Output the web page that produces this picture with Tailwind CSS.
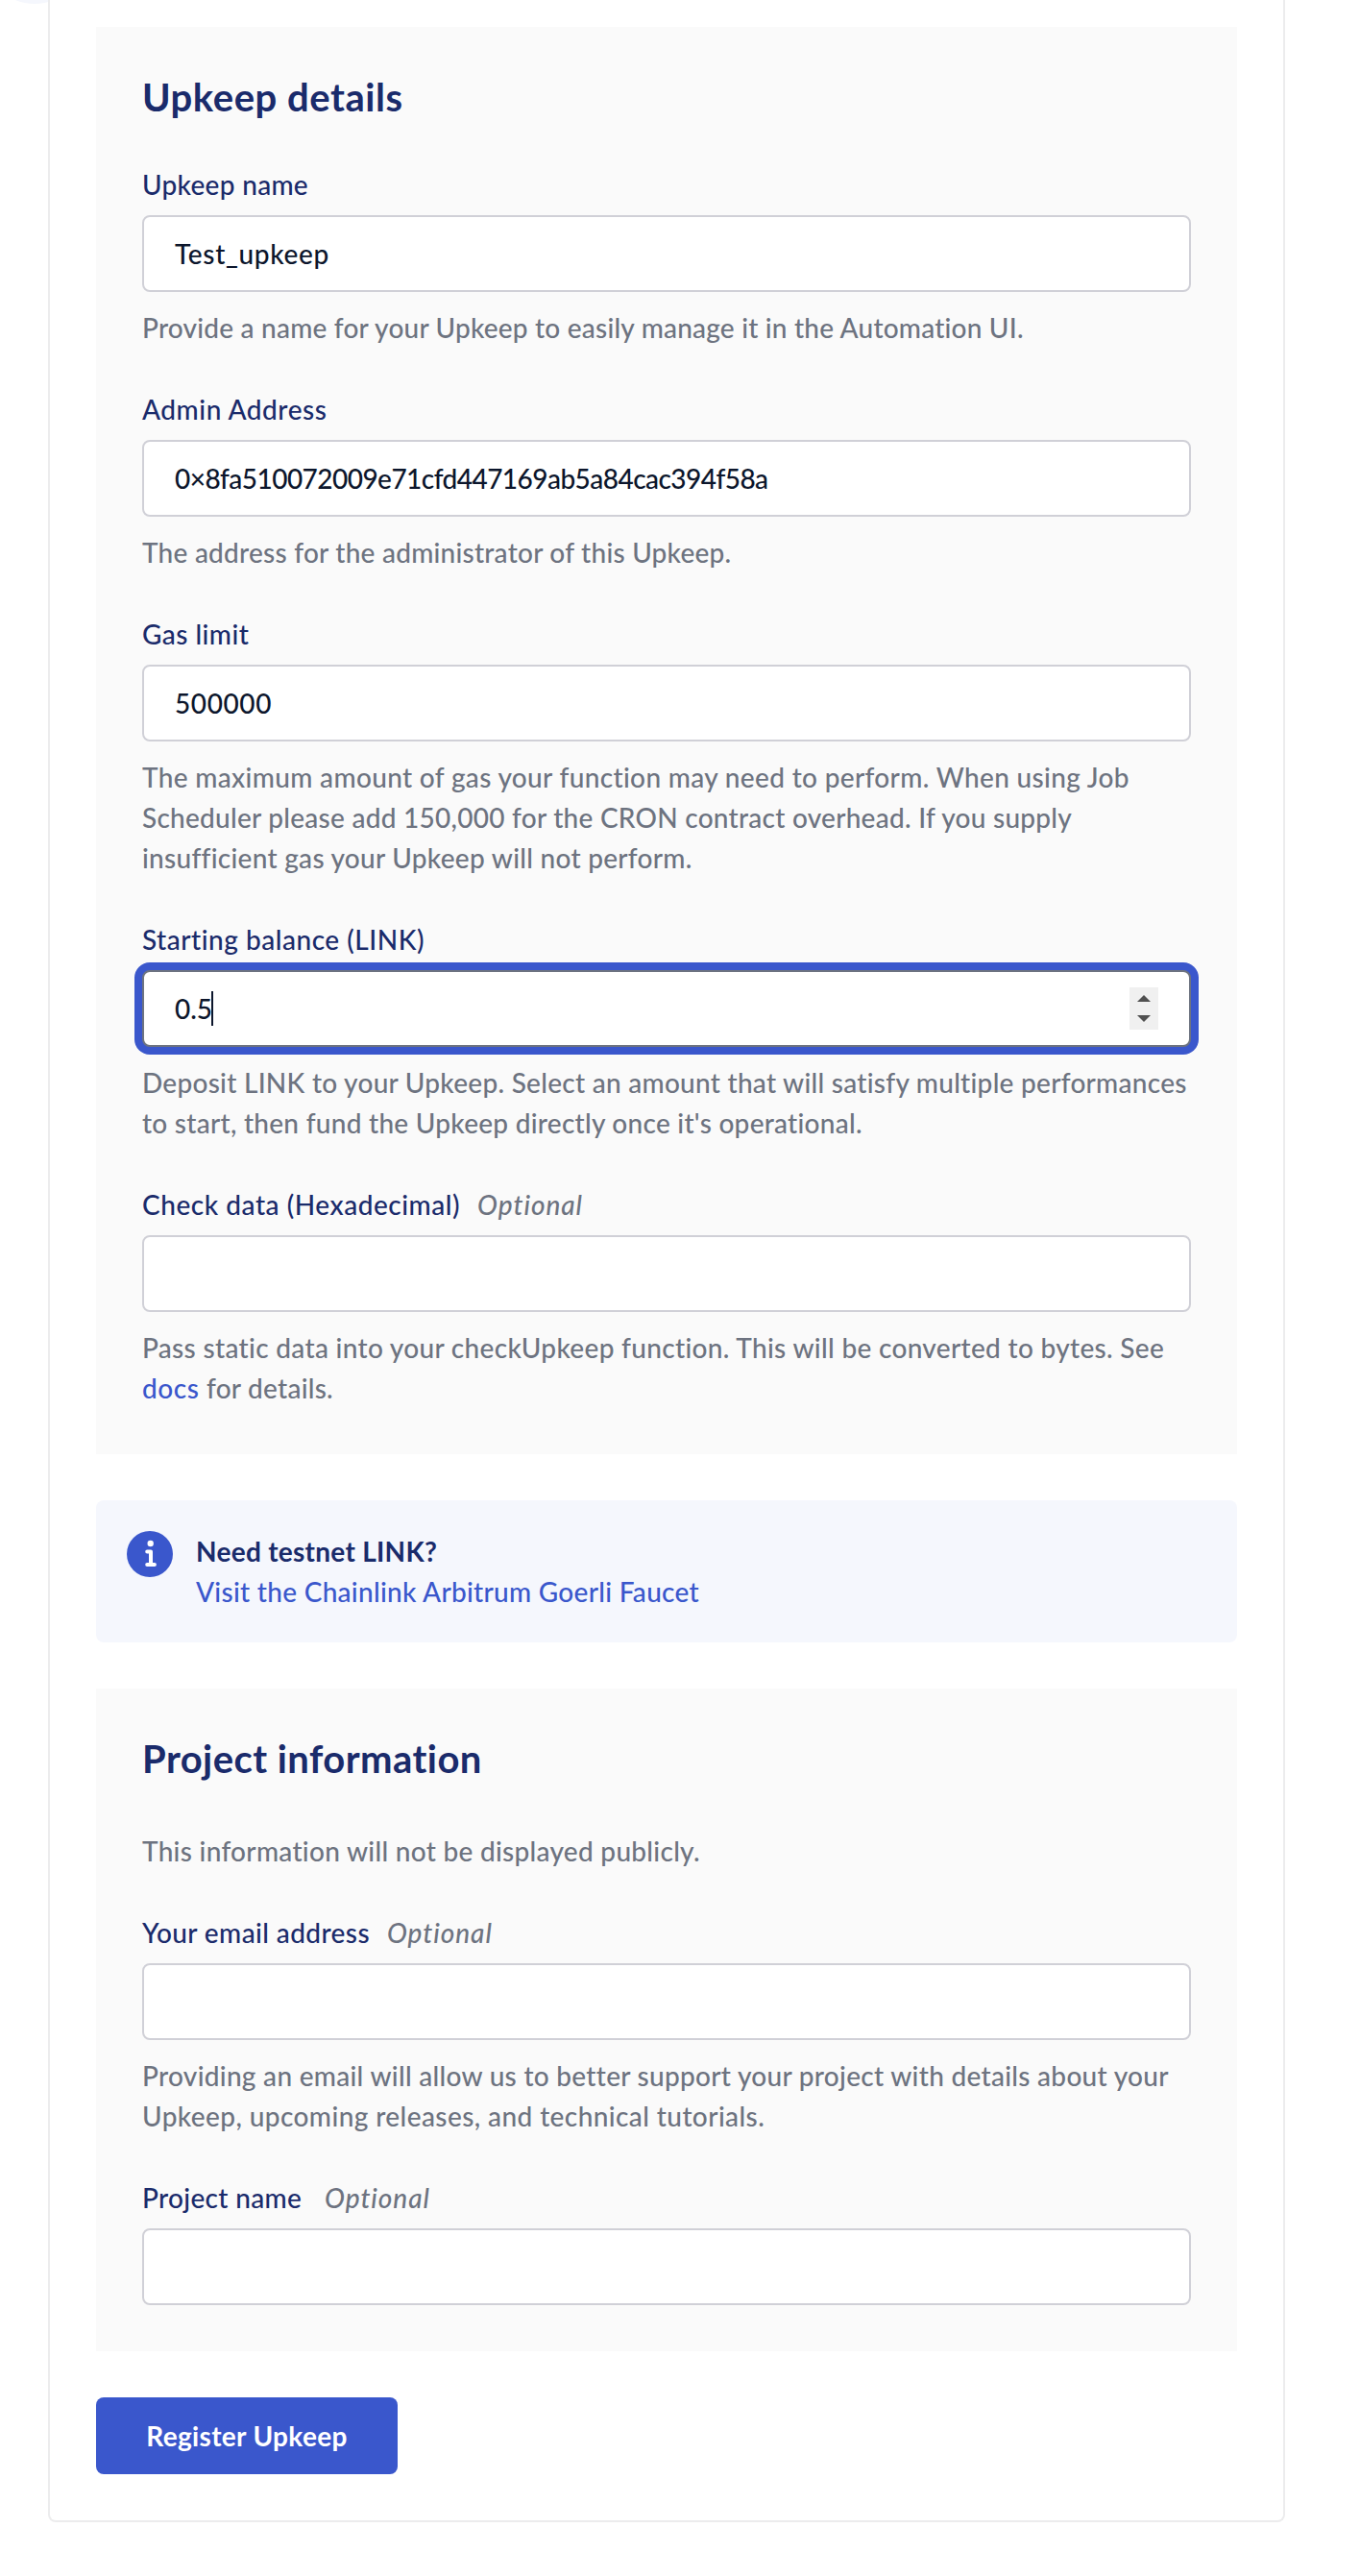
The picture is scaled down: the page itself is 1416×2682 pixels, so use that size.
<!DOCTYPE html>
<html lang="en">
<head>
<meta charset="utf-8">
<title>Register new Upkeep</title>
<script src="https://cdn.jsdelivr.net/npm/@tailwindcss/browser@4"></script>
</head>
<body class="bg-white font-['Lato',sans-serif] font-medium text-[28px] leading-[42px] text-[#6d7380] overflow-x-hidden">
<div class="relative h-[2682px] overflow-hidden pl-[50px]">
  <!-- tail of the step badge above -->
  <div class="absolute -left-[17px] -top-[102px] size-[106px] rounded-full bg-[#f5f7fd]"></div>

  <main class="relative w-[1288px] h-[2626px] pt-7 px-12 bg-white border-2 border-t-0 border-[#ececed] rounded-b-lg">

    <section class="h-[1486px] bg-[#fafafa] px-12 pt-[49px]">
      <h2 class="text-[40px] leading-[48px] font-bold text-[#1a2b6b] tracking-[0.55px]">Upkeep details</h2>

      <div class="mt-[46px] flex flex-col gap-[43px]">
        <div>
          <label class="block text-[#1a2b6b] tracking-[0.3px]">Upkeep name</label>
          <div class="mt-[11px] h-20 flex items-center px-8 bg-white border-2 border-[#d0d0d7] rounded-lg text-[#0c162c] tracking-[0.65px]">Test_upkeep</div>
          <p class="mt-4 whitespace-nowrap tracking-[0.21px]">Provide a name for your Upkeep to easily manage it in the Automation UI.</p>
        </div>

        <div>
          <label class="block text-[#1a2b6b] tracking-[0.54px]">Admin Address</label>
          <div class="mt-[11px] h-20 flex items-center px-8 bg-white border-2 border-[#d0d0d7] rounded-lg text-[#0c162c] tracking-[-0.54px]">0×8fa510072009e71cfd447169ab5a84cac394f58a</div>
          <p class="mt-4 whitespace-nowrap tracking-[0.24px]">The address for the administrator of this Upkeep.</p>
        </div>

        <div>
          <label class="block text-[#1a2b6b] tracking-[0.45px]">Gas limit</label>
          <div class="mt-[11px] h-20 flex items-center px-8 bg-white border-2 border-[#d0d0d7] rounded-lg text-[#0c162c] tracking-[0.59px]">500000</div>
          <p class="mt-4 whitespace-nowrap"><span class="tracking-[0.34px]">The maximum amount of gas your function may need to perform. When using Job</span><br><span class="tracking-[0.26px]">Scheduler please add 150,000 for the CRON contract overhead. If you supply</span><br><span class="tracking-[0.28px]">insufficient gas your Upkeep will not perform.</span></p>
        </div>

        <div>
          <label class="block text-[#1a2b6b] tracking-[0.52px]">Starting balance (LINK)</label>
          <div class="mt-[11px] h-20 flex items-center pl-8 pr-8 bg-white border-2 border-[#6d7380] rounded-lg ring-8 ring-[#3a57cc] text-[#0c162c]">
            <span>0.5</span>
            <span class="w-0.5 h-9 -ml-px bg-[#0c162c]"></span>
            <svg class="ml-auto w-[30px] h-11 bg-[#f0f0f0]" viewBox="0 0 30 44" fill="#505050"><path d="M8 15L15 8L22 15Z"/><path d="M8 29H22L15 36Z"/></svg>
          </div>
          <p class="mt-4 whitespace-nowrap"><span class="tracking-[0.27px]">Deposit LINK to your Upkeep. Select an amount that will satisfy multiple performances</span><br><span class="tracking-[0.27px]">to start, then fund the Upkeep directly once it's operational.</span></p>
        </div>

        <div>
          <div class="flex gap-[18px]"><label class="text-[#1a2b6b] tracking-[0.54px]">Check data (Hexadecimal)</label><em class="tracking-[0.95px]">Optional</em></div>
          <div class="mt-[11px] h-20 bg-white border-2 border-[#d0d0d7] rounded-lg"></div>
          <p class="mt-4 whitespace-nowrap"><span class="tracking-[0.32px]">Pass static data into your checkUpkeep function. This will be converted to bytes. See</span><br><a class="text-[#3a57cc] tracking-[0.6px]">docs</a><span class="tracking-[0.25px]"> for details.</span></p>
        </div>
      </div>
    </section>

    <section class="mt-12 h-[148px] flex bg-[#f5f7fd] rounded-lg pl-8">
      <svg class="mt-8 size-12 shrink-0" viewBox="0 0 48 48" fill="none"><circle cx="24" cy="24" r="24" fill="#3a57cc"/><circle cx="24.7" cy="13" r="3.2" fill="#fff"/><path d="M21.2 21.4H25V35M21.2 35H28.9" stroke="#fff" stroke-width="4" stroke-linecap="round" stroke-linejoin="round"/></svg>
      <div class="ml-6 mt-8">
        <p class="font-bold text-[#1a2b6b] tracking-[0.28px]">Need testnet LINK?</p>
        <a class="block text-[#3a57cc] tracking-[0.29px]">Visit the Chainlink Arbitrum Goerli Faucet</a>
      </div>
    </section>

    <section class="mt-12 h-[690px] bg-[#fafafa] px-12 pt-[49px]">
      <h2 class="text-[40px] leading-[48px] font-bold text-[#1a2b6b] tracking-[0.45px]">Project information</h2>
      <div class="mt-[51px] flex flex-col gap-[43px]">
        <p class="tracking-[0.29px]">This information will not be displayed publicly.</p>

        <div>
          <div class="flex gap-[18px]"><label class="text-[#1a2b6b] tracking-[0.4px]">Your email address</label><em class="tracking-[0.95px]">Optional</em></div>
          <div class="mt-[11px] h-20 bg-white border-2 border-[#d0d0d7] rounded-lg"></div>
          <p class="mt-4 whitespace-nowrap"><span class="tracking-[0.29px]">Providing an email will allow us to better support your project with details about your</span><br><span class="tracking-[0.41px]">Upkeep, upcoming releases, and technical tutorials.</span></p>
        </div>

        <div>
          <div class="flex gap-6"><label class="text-[#1a2b6b] tracking-[0.32px]">Project name</label><em class="tracking-[0.95px]">Optional</em></div>
          <div class="mt-[11px] h-20 bg-white border-2 border-[#d0d0d7] rounded-lg"></div>
        </div>
      </div>
    </section>

    <button class="mt-12 w-[314px] h-20 block bg-[#3a57cc] rounded-lg font-bold text-white tracking-[0.33px]">Register Upkeep</button>
  </main>
</div>
</body>
</html>
